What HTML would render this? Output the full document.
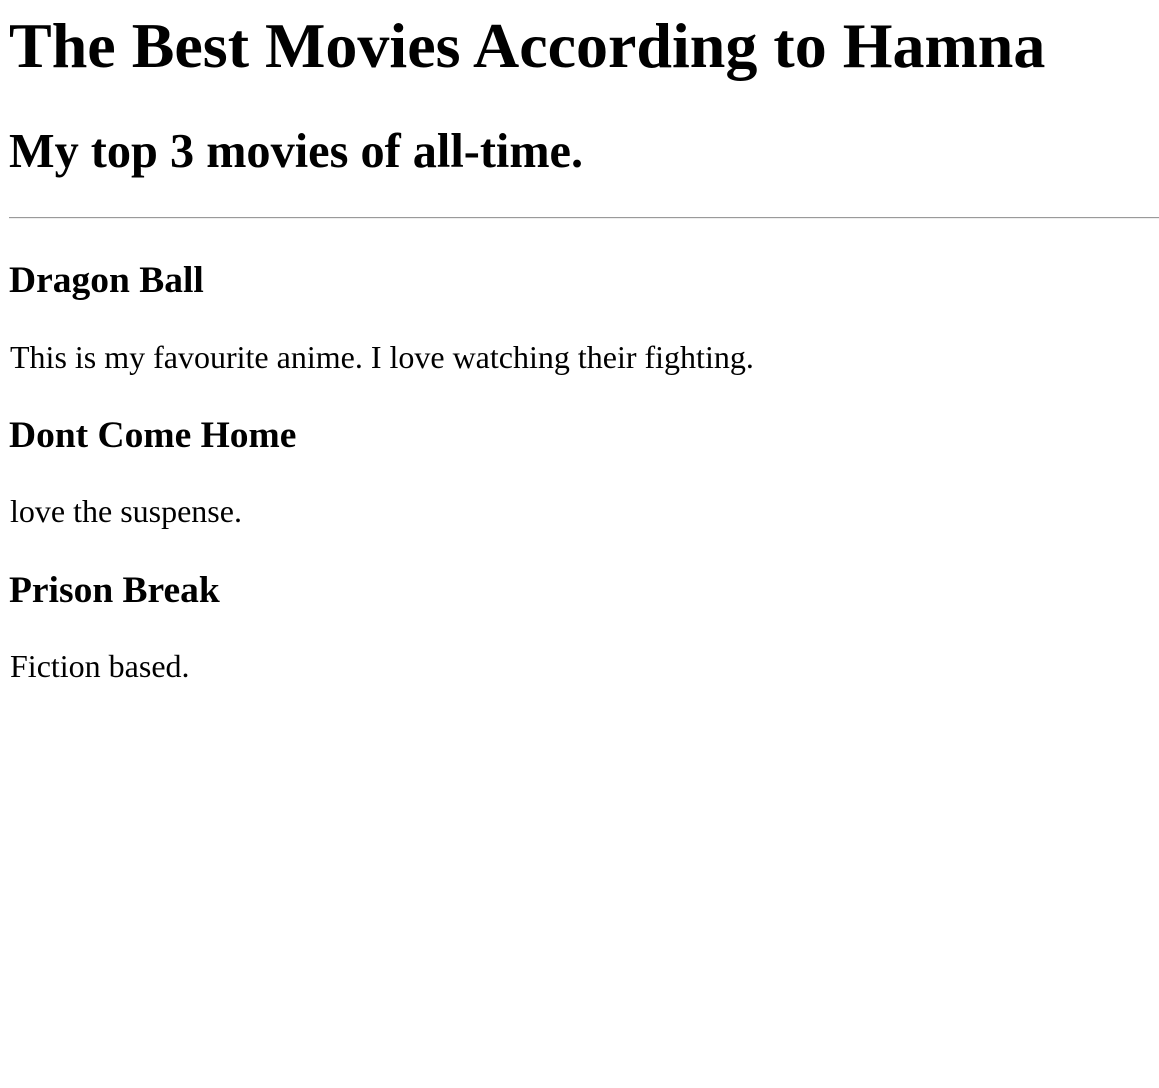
<!DOCTYPE html>
<html><head><meta charset="utf-8"><style>
body{margin:0;background:#fff;font-family:"Liberation Serif",serif;color:#000;}
.a{position:absolute;margin:0;line-height:1;white-space:nowrap;left:9px;}
h1.a{font-size:64px;top:14px;font-weight:bold;}
h2.a{font-size:48.3px;top:128px;font-weight:bold;}
h3.a{font-size:37.5px;font-weight:bold;}
p.a{font-size:32px;left:10px;}
.hr{position:absolute;left:9px;width:1150px;top:217px;height:0;border-top:1px solid #9a9a9a;border-bottom:1px solid #eee;}
</style></head><body>
<h1 class="a">The Best Movies According to Hamna</h1>
<h2 class="a">My top 3 movies of all-time.</h2>
<div class="hr"></div>
<h3 class="a" style="top:262px">Dragon Ball</h3>
<p class="a" style="top:341px">This is my favourite anime. I love watching their fighting.</p>
<h3 class="a" style="top:417px">Dont Come Home</h3>
<p class="a" style="top:495px">love the suspense.</p>
<h3 class="a" style="top:572px">Prison Break</h3>
<p class="a" style="top:650px">Fiction based.</p>
</body></html>
